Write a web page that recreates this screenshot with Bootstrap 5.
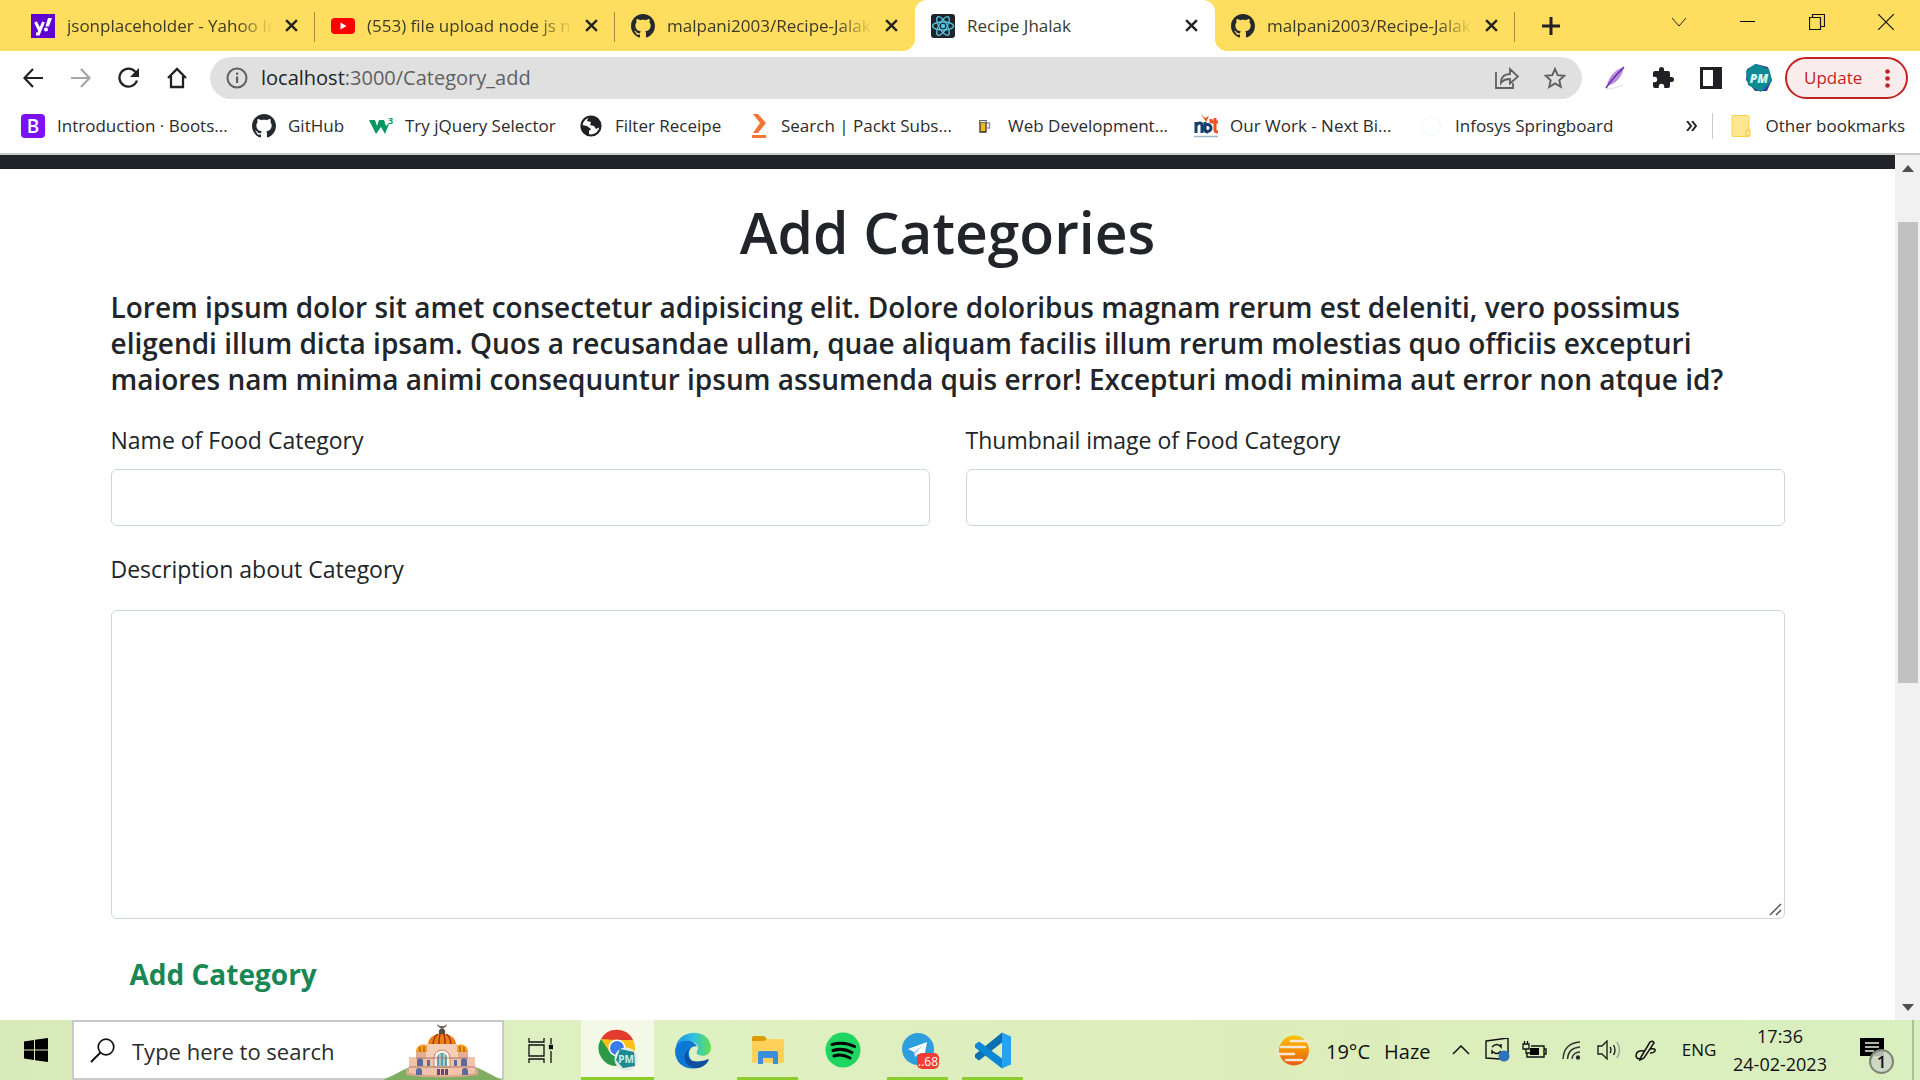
<!DOCTYPE html>
<html lang="en">
<head>
<meta charset="utf-8">
<meta name="viewport" content="width=device-width, initial-scale=1">
<title>Recipe Jhalak</title>
<link href="https://cdn.jsdelivr.net/npm/bootstrap@5.3.0/dist/css/bootstrap.min.css" rel="stylesheet">
<style>
  body { font-family: "Open Sans", "Noto Sans", sans-serif; color: #212529; }
  svg { display: block; flex: none; }
  button.plain, a.plain { background: none; border: 0; padding: 0; color: inherit; text-decoration: none; }
  .slot { display: flex; align-items: center; justify-content: center; flex: none; width: 48px; }

  /* tab strip */
  .tabstrip { background: #ffdd5e; height: 51px; padding-left: 15px; }
  .tab { position: relative; width: 300px; padding: 0 17px 0 16px; gap: 12px; font-size: 17px; color: #3c3a28; }
  .tab:not(.current)::after { content: ""; position: absolute; right: 0; top: 12px; height: 30px; width: 1px; background: #a58f3e; }
  .tab.before::after { display: none; }
  .tab-title { flex: 1 1 0; min-width: 0; overflow: hidden; white-space: nowrap; }
  .fade-out { -webkit-mask-image: linear-gradient(90deg, #000 82%, transparent 100%); mask-image: linear-gradient(90deg, #000 82%, transparent 100%); }
  .tab.current { background: #fff; border-radius: 12px 12px 0 0; }
  .tab.current::before, .tab.current::after { content: ""; position: absolute; bottom: 0; width: 12px; height: 12px; }
  .tab.current::before { left: -12px; background: radial-gradient(circle at 0 0, transparent 12px, #fff 12px); }
  .tab.current::after { right: -12px; background: radial-gradient(circle at 100% 0, transparent 12px, #fff 12px); }
  .caption-btn { width: 69px; height: 44px; }

  /* address row */
  .toolbar { height: 54px; padding: 0 12px 0 9px; }
  .omnibox { background: #e0e0e0; height: 42px; border-radius: 21px; margin: 0 9px; padding: 0 3px 0 16px; color: #606060; }
  .url { font-size: 20px; margin-left: 13px; }
  .update { height: 42px; width: 123px; border: 2px solid #c5221f; border-radius: 21px; background: #f9ecec; color: #c5221f; font-size: 17px; padding: 0 16px 0 17px; margin-left: 2px; }

  /* bookmarks */
  .bookmarks { height: 50px; padding: 0 15px 6px 21px; font-size: 17px; border-bottom: 2px solid #c9c9c9; white-space: nowrap; color: #2b2b2b; }
  .bookmark-grid { display: grid; grid-template-columns: 231px 117px 210px 166px 227px 222px 225px 240px; }
  .bookmark-grid a, .others a { gap: 12px; }
  .more { width: 42px; }

  /* page */
  .strip { height: 14px; background: #212529; }
  .page-col { max-width: 1710px; padding: 27px 18px 0; }
  .page-col .row { --bs-gutter-x: 36px; }
  .title-xl { font-size: 57px; line-height: 72px; font-weight: 600; margin-bottom: 21px; }
  .intro { font-size: 28px; line-height: 36px; font-weight: 600; margin-bottom: 25px; }
  .form-label { font-size: 23px; line-height: 36px; margin-bottom: 11px; }
  .form-control { font-size: 23px; line-height: 36px; padding: 9px 18px; border-radius: 6px; border-color: #ced4da; height: 57px; }
  .desc-label { margin: 25px 0 23px; }
  textarea.form-control { height: 309px; resize: none; }
  .grip { position: absolute; right: 3px; bottom: 3px; }
  .submit { font-size: 28px; line-height: 45px; font-weight: 700; color: #198754; padding: 12px 18px; margin-top: 20px; }
  .scroller { width: 25px; background: #f1f1f1; color: #505050; padding: 9px 0 8px; }
  .track { width: 20px; padding-top: 50px; }
  .thumb { background: #c1c1c1; height: 59%; }

  /* taskbar */
  .taskbar { height: 60px; background: linear-gradient(90deg, #d8eab9, #dff0c3 35%, #ddedba 65%, #d9efc0); color: #111; }
  .start { width: 72px; }
  .search { width: 432px; border: 2px solid #c8c8c8; background: #fff; padding-left: 16px; gap: 17px; position: relative; }
  .search input { border: 0; outline: 0; font-size: 22px; width: 220px; padding: 3px 0 0; background: none; }
  .search input::placeholder { color: #2b2b2b; opacity: 1; }
  .palace { position: absolute; right: 0; bottom: -2px; }
  .apps { gap: 2px; padding-left: 2px; }
  .app { width: 73px; position: relative; }
  .app.open::after { content: ""; position: absolute; bottom: 0; left: 6px; right: 6px; height: 3px; background: #8bcd2d; }
  .app.active { background: #f3f8e7; }
  .app.active::after { left: 0; right: 0; }
  .tray { font-size: 18px; line-height: 28px; }
  .weather { font-size: 20px; gap: 14px; width: 167px; white-space: nowrap; }
  .weather span { padding-top: 4px; }
  .chevron { width: 36px; }
  .tray-icons { padding-right: 6px; }
  .tray-icons .slot { width: 37px; }
  .lang { width: 58px; font-size: 17px; }
  .clock { width: 104px; white-space: nowrap; text-align: center; }
  .notice { width: 80px; position: relative; }
  .notice-count { position: absolute; left: 37px; top: 29px; width: 25px; height: 25px; border-radius: 50%; border: 2px solid #7e8578; background: #cdd4c5dd; font-size: 17px; line-height: 21px; font-weight: 600; text-align: center; }
  .peek { width: 8px; border-left: 2px solid #acc096; }
</style>
</head>
<body>
<svg class="d-none">
  <symbol id="octo" viewBox="0 0 16 16"><path fill="#24292f" d="M8 0C3.58 0 0 3.58 0 8c0 3.54 2.29 6.53 5.47 7.59.4.07.55-.17.55-.38 0-.19-.01-.82-.01-1.49-2.01.37-2.53-.49-2.69-.94-.09-.23-.48-.94-.82-1.13-.28-.15-.68-.52-.01-.53.63-.01 1.08.58 1.23.82.72 1.21 1.87.87 2.33.66.07-.52.28-.87.51-1.07-1.78-.2-3.64-.89-3.64-3.95 0-.87.31-1.59.82-2.15-.08-.2-.36-1.02.08-2.12 0 0 .67-.21 2.2.82.64-.18 1.32-.27 2-.27.68 0 1.36.09 2 .27 1.53-1.04 2.2-.82 2.2-.82.44 1.1.16 1.92.08 2.12.51.56.82 1.27.82 2.15 0 3.07-1.87 3.75-3.65 3.95.29.25.54.73.54 1.48 0 1.07-.01 1.93-.01 2.2 0 .21.15.46.55.38A8.012 8.012 0 0 0 16 8c0-4.42-3.58-8-8-8z"/></symbol>
  <symbol id="x" viewBox="0 0 12 12"><path d="M1 1l10 10M11 1L1 11" stroke="#222" stroke-width="2.2"/></symbol>
  <symbol id="pm" viewBox="0 0 28 30"><path d="M11 1l12 3 4 13-5 11-12 0L1 17 2 6z" fill="#3a3f95"/><path d="M10 1l14 5 3 12-11 11L3 22 1 8z" fill="#0c8c92"/><text x="14" y="20" font-size="12" font-weight="800" font-style="italic" text-anchor="middle" fill="#d5f6f4">PM</text></symbol>
</svg>

<div class="vh-100 d-flex flex-column overflow-hidden">
  <header class="flex-shrink-0">
    <nav class="tabstrip d-flex align-items-stretch" aria-label="Tabs">
      <div class="tab d-flex align-items-center">
        <svg width="24" height="24" viewBox="0 0 24 24"><path d="M0 0h24v24H0z" fill="#5f01d1"/><path d="M4.500 8l4 8M12.500 8L7.500 20H5" fill="none" stroke="#fff" stroke-width="3"/><path d="M17 4h4l-3 8.500h-3.500z" fill="#fff"/><circle cx="15" cy="15.500" r="2" fill="#fff"/></svg>
        <span class="tab-title fade-out">jsonplaceholder - Yahoo In</span>
        <button class="plain" aria-label="Close tab"><svg width="13" height="13"><use href="#x"/></svg></button>
      </div>
      <div class="tab d-flex align-items-center">
        <svg width="24" height="24" viewBox="0 0 24 24"><rect y="4" width="24" height="16" rx="4" fill="#f00"/><path d="M9.500 8.500l6 3.500-6 3.500z" fill="#fff"/></svg>
        <span class="tab-title fade-out">(553) file upload node js n</span>
        <button class="plain" aria-label="Close tab"><svg width="13" height="13"><use href="#x"/></svg></button>
      </div>
      <div class="tab before d-flex align-items-center">
        <svg width="24" height="24"><use href="#octo"/></svg>
        <span class="tab-title fade-out">malpani2003/Recipe-Jalak</span>
        <button class="plain" aria-label="Close tab"><svg width="13" height="13"><use href="#x"/></svg></button>
      </div>
      <div class="tab current d-flex align-items-center">
        <svg width="24" height="24" viewBox="0 0 24 24"><rect width="24" height="24" rx="3" fill="#20232a"/><g fill="none" stroke="#55c8e8" stroke-width="1.300"><ellipse cx="12" cy="12" rx="10.500" ry="4"/><ellipse cx="12" cy="12" rx="10.500" ry="4" transform="rotate(60 12 12)"/><ellipse cx="12" cy="12" rx="10.500" ry="4" transform="rotate(120 12 12)"/></g><circle cx="12" cy="12" r="2.200" fill="#55c8e8"/></svg>
        <span class="tab-title">Recipe Jhalak</span>
        <button class="plain" aria-label="Close tab"><svg width="13" height="13"><use href="#x"/></svg></button>
      </div>
      <div class="tab d-flex align-items-center">
        <svg width="24" height="24"><use href="#octo"/></svg>
        <span class="tab-title fade-out">malpani2003/Recipe-Jalak</span>
        <button class="plain" aria-label="Close tab"><svg width="13" height="13"><use href="#x"/></svg></button>
      </div>
      <button class="plain slot ms-1" aria-label="New tab"><svg class="ms-3" width="18" height="18" viewBox="0 0 18 18"><path d="M9 0v18M0 9h18" stroke="#222" stroke-width="3"/></svg></button>
      <div class="d-flex ms-auto">
        <button class="plain slot caption-btn" aria-label="Search tabs"><svg width="16" height="10" viewBox="0 0 16 10"><path d="M1 1l7 8 7-8" fill="none" stroke="#222"/></svg></button>
        <button class="plain slot caption-btn" aria-label="Minimise"><svg width="15" height="2"><path d="M0 0h15v1H0z"/></svg></button>
        <button class="plain slot caption-btn" aria-label="Restore"><svg width="16" height="16" viewBox="0 0 16 16"><path d="M.5 3.500h11v12H.5zM3.500 3.500v-3h12v12h-4" fill="none" stroke="#111" stroke-width="1.200"/></svg></button>
        <button class="plain slot caption-btn" aria-label="Close window"><svg width="16" height="16" viewBox="0 0 16 16"><path d="M0 0l16 16M16 0L0 16" stroke="#111" stroke-width="1.200"/></svg></button>
      </div>
    </nav>

    <div class="toolbar d-flex align-items-center">
      <button class="plain slot" aria-label="Back"><svg width="20" height="20" viewBox="0 0 20 20"><path d="M20 10H2M10 1L1.500 10l8.500 9" fill="none" stroke="#222" stroke-width="2.200"/></svg></button>
      <button class="plain slot" aria-label="Forward"><svg width="20" height="20" viewBox="0 0 20 20"><path d="M0 10h18M10 1l8.500 9-8.500 9" fill="none" stroke="#a5a5a5" stroke-width="2.200"/></svg></button>
      <button class="plain slot" aria-label="Reload"><svg width="22" height="22" viewBox="0 0 22 22"><path d="M19 13.500A9 9 0 1 1 17.500 5" fill="none" stroke="#222" stroke-width="2.300"/><path d="M21 1v9h-9z" fill="#222"/></svg></button>
      <button class="plain slot" aria-label="Home"><svg width="20" height="22" viewBox="0 0 20 22"><path d="M1 11L10 2l9 9M4 9v11h12V9" fill="none" stroke="#222" stroke-width="2.300"/></svg></button>
      <div class="omnibox flex-grow-1 d-flex align-items-center">
        <svg width="22" height="22" viewBox="0 0 22 22"><circle cx="11" cy="11" r="9.500" fill="none" stroke="#606060" stroke-width="2"/><path d="M10 9.500h2.200V16H10zM10 5.500h2.200v2.300H10z" fill="#606060"/></svg>
        <a class="plain flex-grow-1 url" href="#"><span class="text-body">localhost</span>:3000/Category_add</a>
        <button class="plain slot" aria-label="Share"><svg width="24" height="22" viewBox="0 0 24 22"><path d="M1 5v16h17v-5M6 16c0-6 3-9 9-9V2l8 7.500-8 7V12c-5 0-7 1-9 4z" fill="none" stroke="#606060" stroke-width="1.800"/></svg></button>
        <button class="plain slot" aria-label="Bookmark"><svg width="22" height="22" viewBox="0 0 22 22"><path d="M11 2l2.700 6.200 6.600.6-5 4.500 1.500 6.600-5.800-3.500L5.200 20l1.500-6.700-5-4.500 6.600-.6z" fill="none" stroke="#606060" stroke-width="1.900"/></svg></button>
      </div>
      <button class="plain slot" aria-label="Feather extension"><svg width="20" height="24" viewBox="0 0 20 24"><path d="M19 1C9 4 3 12 2 20 10 18 17 12 19 1z" fill="#b98ae0"/><path d="M19 1C12 8 6 14 1 22" stroke="#6a2aa8" stroke-width="1.500" fill="none"/><path d="M1 23c7 0 11-2 17-4" stroke="#ddd" fill="none"/></svg></button>
      <button class="plain slot" aria-label="Extensions"><svg width="24" height="24" viewBox="0 0 24 24"><path fill="#202124" d="M20.500 11H19V7a2 2 0 0 0-2-2h-4V3.500a2.500 2.500 0 0 0-5 0V5H4a2 2 0 0 0-2 2v3.800h1.500a2.700 2.700 0 0 1 0 5.400H2V20a2 2 0 0 0 2 2h3.800v-1.500a2.700 2.700 0 0 1 5.400 0V22H17a2 2 0 0 0 2-2v-4h1.500a2.500 2.500 0 0 0 0-5z"/></svg></button>
      <button class="plain slot" aria-label="Side panel"><svg width="22" height="22" viewBox="0 0 22 22"><path fill="#202124" fill-rule="evenodd" d="M0 0h22v22H0zM3 3v16h10V3z"/></svg></button>
      <button class="plain slot" aria-label="Profile"><svg width="28" height="30"><use href="#pm"/></svg></button>
      <button class="update d-flex align-items-center justify-content-between"><span>Update</span><svg width="5" height="19" viewBox="0 0 5 19" fill="#c5221f"><circle cx="2.500" cy="2.500" r="2.300"/><circle cx="2.500" cy="9.500" r="2.300"/><circle cx="2.500" cy="16.500" r="2.300"/></svg></button>
    </div>

    <nav class="bookmarks d-flex align-items-center" aria-label="Bookmarks">
      <div class="bookmark-grid">
        <a class="plain d-flex align-items-center" href="#"><svg width="24" height="24" viewBox="0 0 24 24"><rect width="24" height="24" rx="4" fill="#7d10f7"/><text x="12" y="19" font-size="19" font-weight="600" text-anchor="middle" fill="#fff">B</text></svg>Introduction · Boots...</a>
        <a class="plain d-flex align-items-center" href="#"><svg width="24" height="24"><use href="#octo"/></svg>GitHub</a>
        <a class="plain d-flex align-items-center" href="#"><svg width="24" height="24" viewBox="0 0 24 24"><path d="M0 6h6l2 6 2-6h5l2 6 2-2h1l-4 10-4-7-5 7z" fill="#059862"/><text x="19" y="10" font-size="9" font-weight="700" fill="#059862">3</text></svg>Try jQuery Selector</a>
        <a class="plain d-flex align-items-center" href="#"><svg width="24" height="24" viewBox="0 0 24 24"><circle cx="12" cy="12" r="9.500" fill="#fff" stroke="#202124" stroke-width="2.200"/><path d="M3 11l5 1 4 3-2 2v5C5 20 2 16 3 11zM12 2c6 0 10 5 9 11l-4 2-2-3-4-1 1-3-4-1 1-3z" fill="#202124"/></svg>Filter Receipe</a>
        <a class="plain d-flex align-items-center" href="#"><svg width="24" height="24" viewBox="0 0 24 24"><path d="M8 0h5l8 9-8 10H8l7-10zM7 21h14v3H7z" fill="#f37435"/></svg>Search | Packt Subs...</a>
        <a class="plain d-flex align-items-center" href="#"><svg width="24" height="24" viewBox="0 0 24 24"><path d="M8 7h6v11H8z" fill="#f0b81a" stroke="#333" stroke-width="1.300"/><path d="M14.500 9h3v5h-3" fill="none" stroke="#999" stroke-width="1.500"/><path d="M7.500 6.500h7v2h-7z" fill="#f6f0dc" stroke="#555" stroke-width=".8"/></svg>Web Development...</a>
        <a class="plain d-flex align-items-center" href="#"><svg width="24" height="24" viewBox="0 0 24 24" fill="none" stroke-width="3"><path d="M2 19V8M2 12q1-3 4-3 2 0 2 3v7M11 8v7q0 3 3 3" stroke="#173f6b"/><circle cx="13.500" cy="14" r="3.500" stroke="#173f6b"/><path d="M17 9V5M21 4v12q0 2 3 2M17 8h7" stroke="#f1511b"/><path d="M7 0l4 4 4-2-3 6z" fill="#f1511b"/><path d="M0 22.500h24" stroke="#9db3c6" stroke-width="1.500"/></svg>Our Work - Next Bi...</a>
        <a class="plain d-flex align-items-center" href="#"><svg width="24" height="24" viewBox="0 0 24 24"><circle cx="12" cy="12" r="9.500" fill="none" stroke="#f2f7fb"/></svg>Infosys Springboard</a>
      </div>
      <div class="others d-flex align-items-center ms-auto">
        <button class="plain slot more" aria-label="More bookmarks"><svg width="11" height="10" viewBox="0 0 11 10"><path d="M1 0l4 5-4 5M6 0l4 5-4 5" fill="none" stroke="#222" stroke-width="2"/></svg></button>
        <div class="vr mx-0"></div>
        <a class="plain d-flex align-items-center ms-3" href="#"><svg width="24" height="22" viewBox="0 0 24 22"><path d="M4 .5h15a1 1 0 0 1 1 1v20H4a1 1 0 0 1-1-1v-19a1 1 0 0 1 1-1z" fill="#ffe693" stroke="#fbd34a"/><path d="M17 21v-6h4v6z" fill="#ffe693" stroke="#f7c93b"/></svg>Other bookmarks</a>
      </div>
    </nav>
  </header>

  <div class="flex-grow-1 d-flex overflow-hidden">
    <main class="flex-grow-1 overflow-hidden">
      <div class="strip"></div>
      <div class="container page-col">
        <h1 class="title-xl text-center">Add Categories</h1>
        <h5 class="intro">Lorem ipsum dolor sit amet consectetur adipisicing elit. Dolore doloribus magnam rerum est deleniti, vero possimus eligendi illum dicta ipsam. Quos a recusandae ullam, quae aliquam facilis illum rerum molestias quo officiis excepturi maiores nam minima animi consequuntur ipsum assumenda quis error! Excepturi modi minima aut error non atque id?</h5>
        <form>
          <div class="row">
            <div class="col-6"><label class="form-label" for="cat-name">Name of Food Category</label><input class="form-control" id="cat-name" type="text"></div>
            <div class="col-6"><label class="form-label" for="cat-thumb">Thumbnail image of Food Category</label><input class="form-control" id="cat-thumb" type="text"></div>
          </div>
          <label class="form-label desc-label d-block" for="cat-desc">Description about Category</label>
          <div class="position-relative">
            <textarea class="form-control" id="cat-desc"></textarea>
            <svg class="grip" width="13" height="13" viewBox="0 0 13 13"><path d="M1 12L12 1M7 12l5-5" stroke="#555" stroke-width="1.500"/></svg>
          </div>
          <button type="button" class="btn submit">Add Category</button>
        </form>
      </div>
    </main>
    <div class="scroller d-flex flex-column align-items-center flex-shrink-0">
      <svg width="12" height="8" viewBox="0 0 12 8"><path d="M6 1l6 7H0z" fill="#505050"/></svg>
      <div class="track flex-grow-1"><div class="thumb"></div></div>
      <svg width="12" height="8" viewBox="0 0 12 8"><path d="M0 0h12L6 7z" fill="#505050"/></svg>
    </div>
  </div>

  <footer class="taskbar d-flex align-items-stretch flex-shrink-0">
    <button class="plain slot start" aria-label="Start"><svg width="24" height="24" viewBox="0 0 24 24"><path d="M0 3.500L10 2v9.500H0zM11 1.800L24 0v11.500H11zM0 12.500h10V22L0 20.500zM11 12.500h13V24l-13-1.800z"/></svg></button>
    <div class="search d-flex align-items-center">
      <svg width="25" height="25" viewBox="0 0 25 25"><circle cx="16" cy="9" r="7.800" fill="none" stroke="#111" stroke-width="1.700"/><path d="M10.500 14.500L1 24" stroke="#111" stroke-width="1.900"/></svg>
      <input type="text" placeholder="Type here to search" aria-label="Type here to search">
      <svg class="palace" width="119" height="56" viewBox="0 0 119 56">
        <path d="M0 56C14 50 22 44 30 42h58c10 2 20 9 31 14z" fill="#7fae62"/>
        <path d="M23 45h72v6q-36 5-72 0z" fill="#d9a58c"/>
        <path d="M26 33h66v16q-33 5-66 0z" fill="#f0c4a8"/>
        <path d="M33 26h52v9H33z" fill="#e3ae95"/><path d="M43 20h32v14H43z" fill="#f4cfb5"/>
        <path d="M45 20c1-14 27-14 28 0z" fill="#ef7d12"/><path d="M50 20q1-8 5-10M56 20q0-9 2-11M62 20q0-9-2-11M68 20q-1-8-5-10" stroke="#8a2f18" stroke-width="1.300" fill="none"/>
        <path d="M33 28c0-8 9-9 11-6v6zM85 28c0-8-9-9-11-6v6z" fill="#f2a01d"/><path d="M37 28v-5M41 28v-6M77 28v-6M81 28v-5" stroke="#a04416"/>
        <path d="M56 10q-1-5 3-6-4 0-5-4 3 3 5 2 2 1 5-2-1 4-5 4 4 1 3 6z" fill="#5b4a42"/>
        <path d="M51 43V34a8 8 0 0 1 16 0v9z" fill="#fff1e4" stroke="#b68576"/><path d="M54 42v-8a5 5 0 0 1 10 0v8z" fill="#5aa0a8"/><path d="M57 30v12M61 30v12" stroke="#fff1e4"/>
        <g fill="#596a9c"><path d="M34 42v-5a3 3 0 0 1 6 0v5zM78 42v-5a3 3 0 0 1 6 0v5zM33 51v-4a3 3 0 0 1 6 0v4zM79 51v-4a3 3 0 0 1 6 0v4zM44 42v-6h3v6zM71 42v-6h3v6z"/></g>
        <path d="M26 43h66M33 34h52" stroke="#b47c6c"/><path d="M54 51v-6h3v6zM58 51v-6h3v6zM62 51v-6h3v6z" fill="#67457a"/>
      </svg>
    </div>
    <div class="apps d-flex">
      <button class="plain app slot" aria-label="Task view"><svg class="me-1" width="25" height="25" viewBox="0 0 25 25" fill="none" stroke="#111" stroke-width="1.300"><path d="M1 0v4h15V0M1 25v-4h15v4M1 7h15v11H1zM23 0v6M23 13v12"/><path d="M21.500 7.500h3v3h-3z" fill="#111"/></svg></button>
      <button class="plain app slot open active" aria-label="Chrome"><svg width="40" height="42" viewBox="0 0 40 42"><circle cx="19" cy="19" r="18" fill="#fbc116"/><path d="M3 10A18 18 0 0 1 35 11H19z" fill="#e33b2e"/><path d="M3 10A18 18 0 0 0 19 37l8-13-16-2z" fill="#2a9a48"/><circle cx="19" cy="19" r="8.500" fill="#fff"/><circle cx="19" cy="19" r="7" fill="#3b7cec"/><circle cx="28" cy="30" r="11.500" fill="#e1e8e5"/><path d="M22 20l14 3 1 14-12 2-7-8z" fill="#1b8a91"/><text x="28" y="34" font-size="10" font-weight="700" text-anchor="middle" fill="#c6f1f0">PM</text></svg></button>
      <button class="plain app slot" aria-label="Edge"><svg width="36" height="37" viewBox="0 0 36 36"><defs><linearGradient id="eg" x1="0" x2="1"><stop stop-color="#1b8fe0"/><stop offset=".5" stop-color="#2fc1e0"/><stop offset="1" stop-color="#66e04c"/></linearGradient></defs><path d="M1 14C4-4 35-5 36 15c0 8-8 10-13 7-3-2 0-3 0-7 0-6-12-10-22-1z" fill="url(#eg)"/><path d="M0 18C1 7 18 5 22 14c-5-1-8 3-8 7 0 9 9 13 18 8-7 11-32 10-32-11z" fill="#0a78d4"/><path d="M15 16c-6 8 0 17 17 11 2-1 2 0 1 2C24 42 7 34 10 22c1-3 3-5 5-6z" fill="#10509f"/></svg></button>
      <button class="plain app slot open" aria-label="File Explorer"><svg width="32" height="28" viewBox="0 0 32 28"><path d="M0 2q0-2 2-2h10l3 3-3 4H0z" fill="#dc9a06"/><path d="M0 5h12l3-2h15q2 0 2 2v20q0 2-2 2H2q-2 0-2-2z" fill="#ffd05a"/><path d="M6 28V17q0-2 2-2h16q2 0 2 2v11h-5v-6H11v6z" fill="#3b8fdd"/></svg></button>
      <button class="plain app slot" aria-label="Spotify"><svg width="36" height="36" viewBox="0 0 36 36"><circle cx="18" cy="18" r="17.500" fill="#1fd760"/><path d="M7 12.500q12-3.500 22.500 2M8 18.500q10-3 19 2M9 24q8-2.500 16 2" stroke="#000" stroke-width="3" stroke-linecap="round" fill="none"/></svg></button>
      <button class="plain app slot open" aria-label="Telegram"><svg width="44" height="40" viewBox="0 0 44 40"><circle cx="22" cy="19" r="16" fill="#2d9fdc"/><path d="M12 19l19-7-3 16-6-4-3 3-1-5z" fill="#fff"/><path d="M18 22l9-7-7 8-1 4z" fill="#a9cfe6"/><rect x="21" y="23" width="22" height="16" rx="5" fill="#f23c34"/><text x="32" y="36" font-size="12" text-anchor="middle" fill="#fff">..68</text></svg></button>
      <button class="plain app slot open" aria-label="VS Code"><svg width="36" height="37" viewBox="0 0 36 36"><path d="M27 0v10L4 28l-4-3v-3z" fill="#0b6fb6"/><path d="M27 36V26L4 9l-4 3v3z" fill="#0d86d3"/><path d="M27 0l9 4v28l-9 4z" fill="#27a1f1"/></svg></button>
    </div>
    <div class="tray d-flex align-items-center ms-auto">
      <button class="plain weather d-flex align-items-center">
        <svg width="36" height="31" viewBox="0 0 36 31"><defs><linearGradient id="sun" x2="0" y2="1"><stop stop-color="#ffc400"/><stop offset="1" stop-color="#e8590c"/></linearGradient></defs><circle cx="18" cy="15.500" r="15" fill="url(#sun)"/><path d="M15 6h20M5 12h24M0 19h18M10 25h16" stroke="#f6e6d2" stroke-width="2.500" stroke-linecap="round"/></svg>
        <span>19°C</span><span>Haze</span>
      </button>
      <button class="plain slot chevron" aria-label="Hidden icons"><svg width="18" height="10" viewBox="0 0 18 10"><path d="M1 9l8-8 8 8" fill="none" stroke="#111" stroke-width="1.500"/></svg></button>
      <div class="d-flex align-items-center tray-icons">
        <button class="plain slot" aria-label="Sync"><svg width="25" height="24" viewBox="0 0 25 24"><path d="M1 3l22-3v20l-8 1-14-1z" fill="none" stroke="#111" stroke-width="1.400"/><path d="M7 9q5-5 9 0V6M16 13q-4 5-9 0v3" fill="none" stroke="#111" stroke-width="1.400"/><circle cx="19" cy="18" r="5.500" fill="#2c72bd"/></svg></button>
        <button class="plain slot" aria-label="Battery"><svg width="25" height="18" viewBox="0 0 25 18"><path d="M9 5h13v11H5v-4M22 8h2v5h-2" fill="none" stroke="#111" stroke-width="1.400"/><path d="M8 7h9v7H8z"/><path d="M1 3h6v5H1zM2.500 0v3M5.500 0v3M4 8v4h4" fill="none" stroke="#111" stroke-width="1.300"/></svg></button>
        <button class="plain slot" aria-label="Network"><svg width="20" height="19" viewBox="0 0 20 19" fill="none" stroke="#333" stroke-width="1.400"><path d="M1 18Q2 2 18 1M5.500 18Q6 7 18 6M10 18q1-7 8-7"/><circle cx="16" cy="16.500" r="1.500" fill="#111"/></svg></button>
        <button class="plain slot" aria-label="Volume"><svg width="24" height="20" viewBox="0 0 24 20" fill="none" stroke="#222" stroke-width="1.400"><path d="M1 6h4l5-5v18l-5-5H1zM13 7q2 3 0 6M16.500 5q3 5 0 10"/><path d="M20 2q5 8 0 16" stroke="#999"/></svg></button>
        <button class="plain slot" aria-label="Pen"><svg width="22" height="21" viewBox="0 0 22 21" fill="none" stroke="#111" stroke-width="1.500"><path d="M6 17L15 2q3-2 4 1L9 18l-4 2zM15 9q6-1 5 2-1 2-5 2M9 11q-8-1-8 5 1 4 5 2"/></svg></button>
      </div>
      <div class="lang text-center">ENG</div>
      <div class="clock">17:36<br>24-02-2023</div>
      <button class="plain notice slot align-self-stretch" aria-label="Notifications"><svg width="24" height="24" viewBox="0 0 24 24"><path d="M0 0h24v18H14l-4 6v-6H0z"/><path d="M5 5h14M5 9h14M5 13h9" stroke="#e7f4d6" stroke-width="1.300"/></svg><span class="notice-count">1</span></button>
      <div class="peek align-self-stretch"></div>
    </div>
  </footer>
</div>
<script src="https://cdn.jsdelivr.net/npm/bootstrap@5.3.0/dist/js/bootstrap.bundle.min.js"></script>
</body>
</html>
